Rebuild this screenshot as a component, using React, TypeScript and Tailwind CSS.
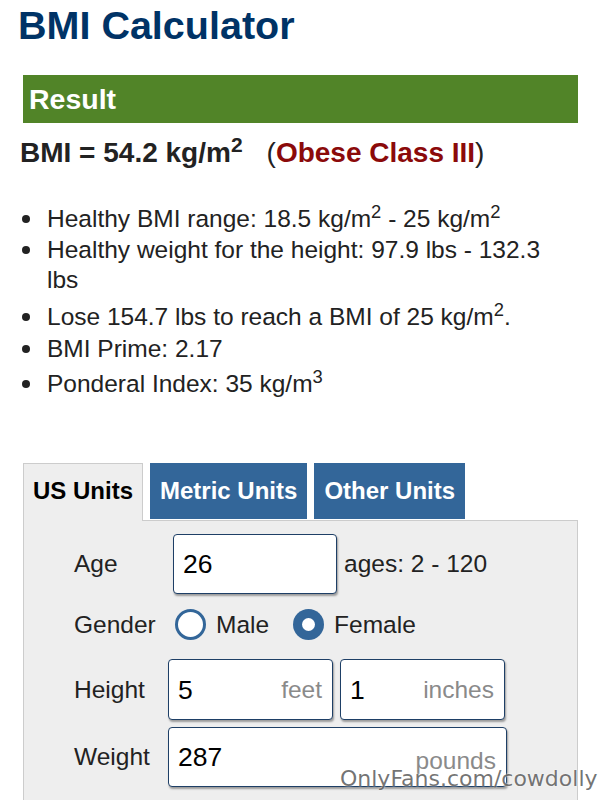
import type { ReactNode } from 'react';

function Bullet({ className, children }: { className: string; children: ReactNode }) {
  return (
    <li className={`flex ${className}`}>
      <span className="flex h-[30px] w-[27px] shrink-0 items-center pl-[2px]">
        <span className="h-[8px] w-[8px] rounded-full bg-[#222]" />
      </span>
      <span className="leading-[30px]">{children}</span>
    </li>
  );
}

function Field({
  value,
  unit,
  className,
  unitClass = '',
}: {
  value: string;
  unit?: string;
  className: string;
  unitClass?: string;
}) {
  return (
    <div
      className={`flex items-center justify-between rounded-[4px] border border-[#1e3f66] bg-white pl-[9px] pr-[10px] leading-[30px] shadow-[1px_2px_2px_rgba(0,0,0,0.35)] ${className}`}
    >
      <span className="text-[26.5px] text-black">{value}</span>
      {unit && <span className={`text-[#8a8a8a] ${unitClass}`}>{unit}</span>}
    </div>
  );
}

export default function App() {
  return (
    <div className="relative h-[800px] w-[602px] overflow-hidden bg-white px-[20px] font-['Liberation_Sans',Arial,sans-serif] text-[24.5px] text-[#222]">
      <h1 className="-ml-[2px] pt-[6px] text-[39.5px] leading-[39px] font-bold text-[#003366]">BMI Calculator</h1>

      <div className="mt-[30px] ml-[3px] h-[48px] w-[555px] bg-[#518428] pl-[6px] text-[28.5px] leading-[48px] font-bold text-white">
        Result
      </div>

      <div className="mt-[14px] text-[28px] leading-[32px] font-bold">
        BMI = 54.2 kg/m<sup>2</sup>
        <span className="ml-[24px] font-normal">
          (<span className="font-bold text-[#8b0a0a]">Obese Class III</span>)
        </span>
      </div>

      <ul className="mt-[35px] w-[537px]">
        <Bullet className="mt-0">
          Healthy BMI range: 18.5 kg/m<sup>2</sup> - 25 kg/m<sup>2</sup>
        </Bullet>
        <Bullet className="mt-[1px]">Healthy weight for the height: 97.9 lbs - 132.3 lbs</Bullet>
        <Bullet className="mt-[7px]">
          Lose 154.7 lbs to reach a BMI of 25 kg/m<sup>2</sup>.
        </Bullet>
        <Bullet className="mt-[2px]">BMI Prime: 2.17</Bullet>
        <Bullet className="mt-[5px]">
          Ponderal Index: 35 kg/m<sup>3</sup>
        </Bullet>
      </ul>

      <div className="mt-[64px] ml-[3px] flex items-start gap-[7px] text-[24px] font-bold">
        <div className="relative z-10 -mb-px h-[58px] border border-b-0 border-[#cccccc] bg-[#eeeeee] px-[9px] leading-[54px] text-black">
          US Units
        </div>
        <div className="h-[56px] bg-[#336699] px-[10px] leading-[56px] text-white">Metric Units</div>
        <div className="h-[56px] bg-[#336699] px-[10px] leading-[56px] text-white">Other Units</div>
      </div>

      <div className="ml-[3px] w-[555px] border border-[#cccccc] bg-[#eeeeee] pt-[13px] pb-[30px] pl-[50px]">
        <div className="flex h-[60px] items-center leading-[30px]">
          <span className="w-[99px] shrink-0">Age</span>
          <Field value="26" className="h-[60px] w-[164px]" />
          <span className="ml-[7px]">ages: 2 - 120</span>
        </div>

        <div className="mt-[15px] flex h-[31px] items-center leading-[30px]">
          <span className="w-[101px] shrink-0">Gender</span>
          <span className="h-[31px] w-[31px] rounded-full border-[3px] border-[#336699] bg-white" />
          <span className="ml-[10px]">Male</span>
          <span className="ml-[24px] flex h-[31px] w-[31px] items-center justify-center rounded-full bg-[#336699]">
            <span className="h-[13px] w-[13px] rounded-full bg-white" />
          </span>
          <span className="ml-[10px]">Female</span>
        </div>

        <div className="mt-[19px] flex h-[61px] items-center leading-[30px]">
          <span className="w-[94px] shrink-0">Height</span>
          <Field value="5" unit="feet" className="h-[61px] w-[165px]" />
          <Field value="1" unit="inches" className="ml-[7px] h-[61px] w-[165px]" />
        </div>

        <div className="mt-[7px] flex h-[60px] items-center leading-[30px]">
          <span className="w-[94px] shrink-0">Weight</span>
          <Field value="287" unit="pounds" unitClass="relative top-[4px]" className="h-[60px] w-[339px]" />
        </div>
      </div>

      <div className="absolute top-[768px] left-[340px] font-['DejaVu_Sans',sans-serif] text-[22px] leading-[22px] text-[rgba(70,70,70,0.75)] [text-shadow:0_0_2px_#fff]">
        OnlyFans.com/cowdolly
      </div>
    </div>
  );
}
